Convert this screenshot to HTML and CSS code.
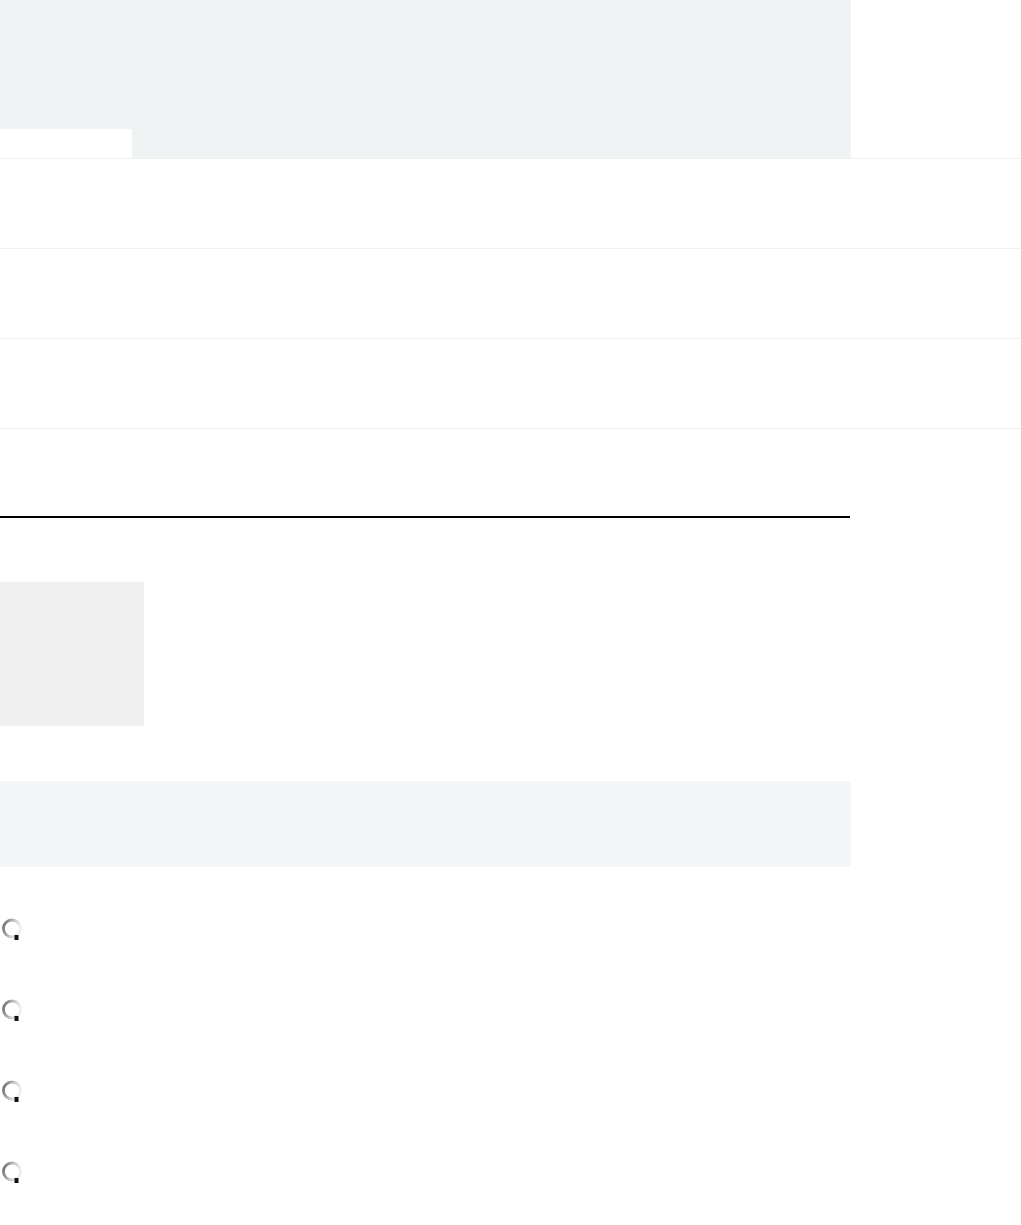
FILE: index.html
```html
<!DOCTYPE html>
<html>
<head>
<meta charset="utf-8">
<link rel="stylesheet" href="styles.css">
</head>
<body>
<header class="hero">
  <div class="hero-top"></div>
  <div class="hero-bottom">
    <div class="hero-notch"></div>
    <div class="hero-fill"></div>
  </div>
</header>
<ul class="rows">
  <li class="row"></li>
  <li class="row"></li>
  <li class="row"></li>
  <li class="row row-last"></li>
</ul>
<div class="rule"></div>
<div class="thumb"></div>
<div class="banner"></div>
<ul class="options">
  <li class="option"><svg class="spin" width="24" height="26" viewBox="0 0 24 26"><defs><linearGradient id="g1" x1="0" y1="0" x2="1" y2="0.3"><stop offset="0" stop-color="#666"/><stop offset="0.6" stop-color="#c8c8c8"/><stop offset="1" stop-color="#efefef"/></linearGradient></defs><circle cx="12" cy="12.5" r="8.5" fill="none" stroke="url(#g1)" stroke-width="2.8"/><rect x="14.5" y="19" width="4" height="5" fill="#111"/></svg></li>
  <li class="option"><svg class="spin" width="24" height="26" viewBox="0 0 24 26"><circle cx="12" cy="12.5" r="8.5" fill="none" stroke="url(#g1)" stroke-width="2.8"/><rect x="14.5" y="19" width="4" height="5" fill="#111"/></svg></li>
  <li class="option"><svg class="spin" width="24" height="26" viewBox="0 0 24 26"><circle cx="12" cy="12.5" r="8.5" fill="none" stroke="url(#g1)" stroke-width="2.8"/><rect x="14.5" y="19" width="4" height="5" fill="#111"/></svg></li>
  <li class="option"><svg class="spin" width="24" height="26" viewBox="0 0 24 26"><circle cx="12" cy="12.5" r="8.5" fill="none" stroke="url(#g1)" stroke-width="2.8"/><rect x="14.5" y="19" width="4" height="5" fill="#111"/></svg></li>
</ul>
</body>
</html>
```
FILE: styles.css
```css
html, body {
  margin: 0;
  padding: 0;
  background: #ffffff;
  font-family: "Liberation Sans", Arial, sans-serif;
}
.hero {
  width: 851px;
  height: 158px;
  display: flex;
  flex-direction: column;
}
.hero-top {
  height: 129px;
  background: #eff3f4;
}
.hero-bottom {
  display: flex;
  flex: 1;
}
.hero-notch {
  width: 132px;
  background: #ffffff;
}
.hero-fill {
  flex: 1;
  background: #eff3f4;
}
.rows {
  list-style: none;
  margin: 0;
  padding: 0;
}
.row {
  height: 89px;
  border-top: 1px solid #f0f0f0;
}
.row-last {
  height: 87px;
}
.rule {
  width: 850px;
  height: 2px;
  background: #000000;
}
.thumb {
  width: 144px;
  height: 144px;
  margin-top: 64px;
  background: #efefef;
}
.banner {
  width: 851px;
  height: 86px;
  margin-top: 55px;
  background: #f2f6f9;
}
.options {
  list-style: none;
  margin: 0;
  padding: 0;
  padding-top: 49px;
  display: flex;
  flex-direction: column;
  gap: 55px;
}
.option {
  height: 26px;
  padding-left: 0;
}
.spin {
  display: block;
}
```
